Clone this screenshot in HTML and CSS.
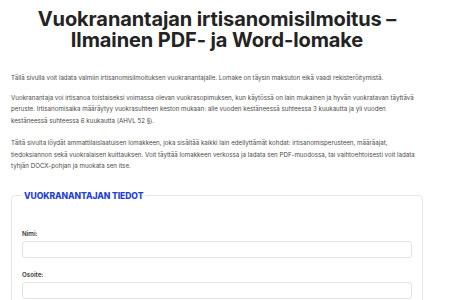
FILE: index.html
```html
<!DOCTYPE html>
<html lang="fi">
<head>
<meta charset="utf-8">
<title>Vuokranantajan irtisanomisilmoitus</title>
<link rel="stylesheet" href="styles.css">
</head>
<body>
<main class="page">
  <h1 class="title">Vuokranantajan irtisanomisilmoitus – Ilmainen PDF- ja Word-lomake</h1>
  <p class="intro intro-first">Tällä sivulla voit ladata valmiin irtisanomisilmoituksen vuokranantajalle. Lomake on täysin maksuton eikä vaadi rekisteröitymistä.</p>
  <p class="intro intro-second">Vuokranantaja voi irtisanoa toistaiseksi voimassa olevan vuokrasopimuksen, kun käytössä on lain mukainen ja hyvän vuokratavan täyttävä peruste. Irtisanomisaika määräytyy vuokrasuhteen keston mukaan: alle vuoden kestäneessä suhteessa 3 kuukautta ja yli vuoden kestäneessä suhteessa 6 kuukautta (AHVL 52 §).</p>
  <p class="intro intro-third">Tältä sivulta löydät ammattilaislaatuisen lomakkeen, joka sisältää kaikki lain edellyttämät kohdat: irtisanomisperusteen, määräajat, tiedoksiannon sekä vuokralaisen kuittauksen. Voit täyttää lomakkeen verkossa ja ladata sen PDF-muodossa, tai vaihtoehtoisesti voit ladata tyhjän DOCX-pohjan ja muokata sen itse.</p>
  <form class="form">
    <fieldset class="group">
      <legend class="group-title">Vuokranantajan tiedot</legend>
      <div class="field">
        <label class="field-label" for="nimi">Nimi:</label>
        <input class="field-input" id="nimi" type="text">
      </div>
      <div class="field">
        <label class="field-label" for="osoite">Osoite:</label>
        <input class="field-input" id="osoite" type="text">
      </div>
    </fieldset>
  </form>
</main>
</body>
</html>
```

FILE: styles.css
```css
html, body {
  margin: 0;
  padding: 0;
  background: #ffffff;
}
body {
  font-family: Inter, "Noto Sans", "Liberation Sans", sans-serif;
  color: #333;
}
.page {
  width: 412px;
  margin-left: 11px;
  padding-top: 9px;
}
.title {
  margin: 0;
  font-size: 20px;
  line-height: 21px;
  font-weight: 700;
  text-align: center;
  color: #232323;
  letter-spacing: -0.1px;
}
.intro {
  margin: 0;
  font-size: 6.2px;
  line-height: 11.5px;
  color: #4a4a4a;
}
.intro-first {
  margin-top: 21px;
}
.intro-second {
  margin-top: 8px;
}
.intro-third {
  margin-top: 11px;
}
.form {
  margin-top: 19px;
}
.group {
  margin: 0;
  padding: 29px 10px 0 10px;
  border: 1px solid #e6e6e6;
  border-radius: 4px;
  height: 110px;
}
.group-title {
  margin: 0;
  padding: 0 2px;
  font-size: 8.6px;
  font-weight: 800;
  text-transform: uppercase;
  color: #1f40d8;
  letter-spacing: -0.1px;
}
.field {
  display: flex;
  flex-direction: column;
  gap: 3.5px;
  margin-bottom: 12.5px;
}
.field-label {
  font-size: 6.2px;
  font-weight: 600;
  color: #333;
  line-height: 8px;
}
.field-input {
  box-sizing: border-box;
  height: 17px;
  margin: 0;
  border: 1px solid #e3e3e3;
  border-radius: 3px;
  background: #fff;
}
```
